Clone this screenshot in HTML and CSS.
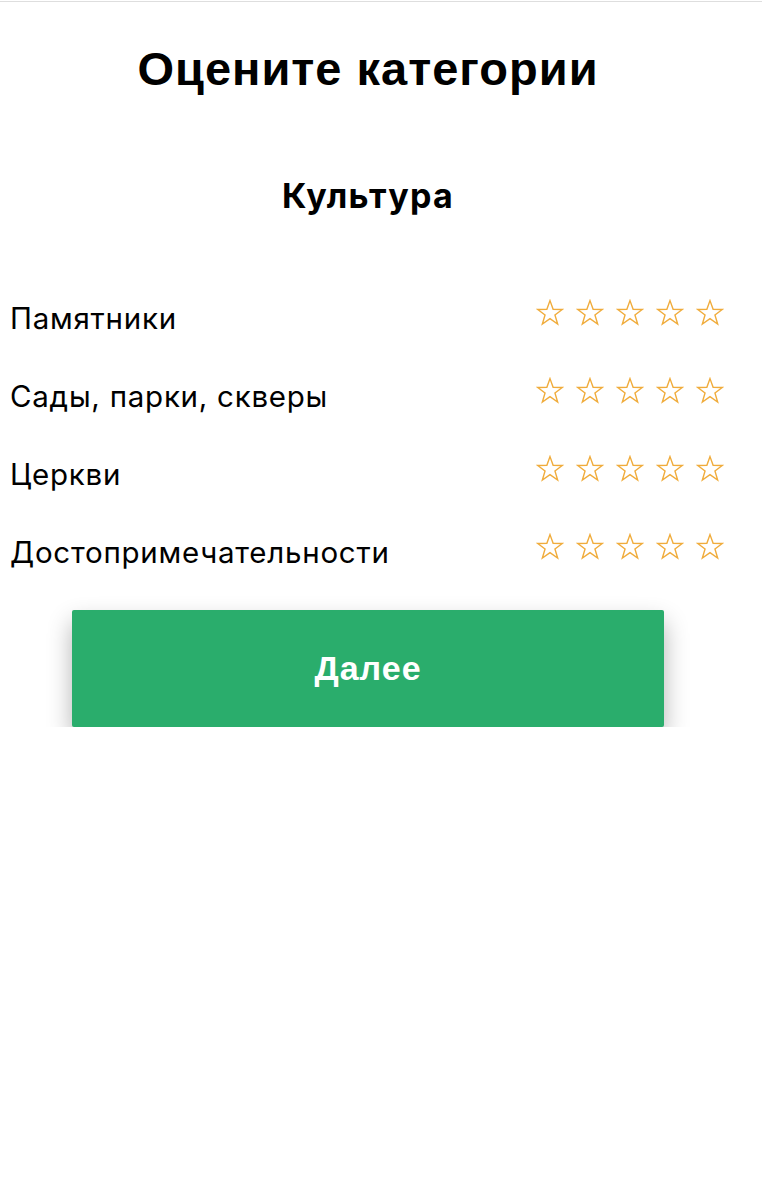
FILE: index.html
```html
<!DOCTYPE html>
<html lang="ru">
<head>
<meta charset="utf-8">
<link rel="stylesheet" href="styles.css">
</head>
<body>
<div class="topline"></div>
<main class="page">
  <h1 class="title">Оцените категории</h1>
  <h2 class="subtitle">Культура</h2>
  <ul class="list">
    <li class="row"><span class="label">Памятники</span><span class="stars"></span></li>
    <li class="row"><span class="label">Сады, парки, скверы</span><span class="stars"></span></li>
    <li class="row"><span class="label">Церкви</span><span class="stars"></span></li>
    <li class="row"><span class="label">Достопримечательности</span><span class="stars"></span></li>
  </ul>
  <button class="next">Далее</button>
</main>
<script>
document.querySelectorAll('.stars').forEach(function(s){
  var h='';
  for(var i=0;i<5;i++){
    h+='<svg class="star" viewBox="0 0 26 26" width="28" height="28"><path d="M13 1.5 L15.9 9.6 L24.4 9.7 L17.6 14.9 L20.1 23.2 L13 18.2 L5.9 23.2 L8.4 14.9 L1.6 9.7 L10.1 9.6 Z" fill="none" stroke="#f0ac3c" stroke-width="1.3" stroke-linejoin="miter"/></svg>';
  }
  s.innerHTML=h;
});
</script>
</body>
</html>
```
FILE: styles.css
```css
html, body {
  margin: 0;
  padding: 0;
  background: #fff;
}
.topline {
  height: 1px;
  margin-top: 1px;
  background: #dedede;
}
.page {
  width: 736px;
  display: flex;
  flex-direction: column;
  align-items: stretch;
}
.title {
  margin: 41px 0 0;
  font-family: "Liberation Sans", Arial, sans-serif;
  font-weight: 700;
  font-size: 47px;
  letter-spacing: 1px;
  line-height: 52px;
  text-align: center;
  color: #000;
}
.subtitle {
  margin: 81px 0 0;
  font-family: Inter, "Liberation Sans", sans-serif;
  font-weight: 700;
  font-size: 34px;
  letter-spacing: 1.3px;
  line-height: 40px;
  text-align: center;
  color: #000;
}
.list {
  list-style: none;
  margin: 59px 0 0;
  padding: 0;
}
.row {
  height: 78px;
  display: flex;
  align-items: center;
  justify-content: space-between;
  padding: 0 12px 0 10px;
}
.label {
  font-family: Inter, "Liberation Sans", sans-serif;
  font-size: 29.5px;
  letter-spacing: 0.75px;
  color: #000;
  padding-top: 8px;
}
.stars {
  display: flex;
  gap: 12px;
  padding-bottom: 2px;
}
.star {
  display: block;
}
.next {
  align-self: center;
  margin-top: 23px;
  width: 592px;
  height: 117px;
  border: none;
  border-radius: 2px;
  background: #2aad6c;
  color: #fff;
  font-family: "Liberation Sans", Arial, sans-serif;
  font-weight: 700;
  font-size: 34px;
  letter-spacing: 1px;
  box-shadow: 0 12px 24px rgba(0, 0, 0, 0.3);
}
```
